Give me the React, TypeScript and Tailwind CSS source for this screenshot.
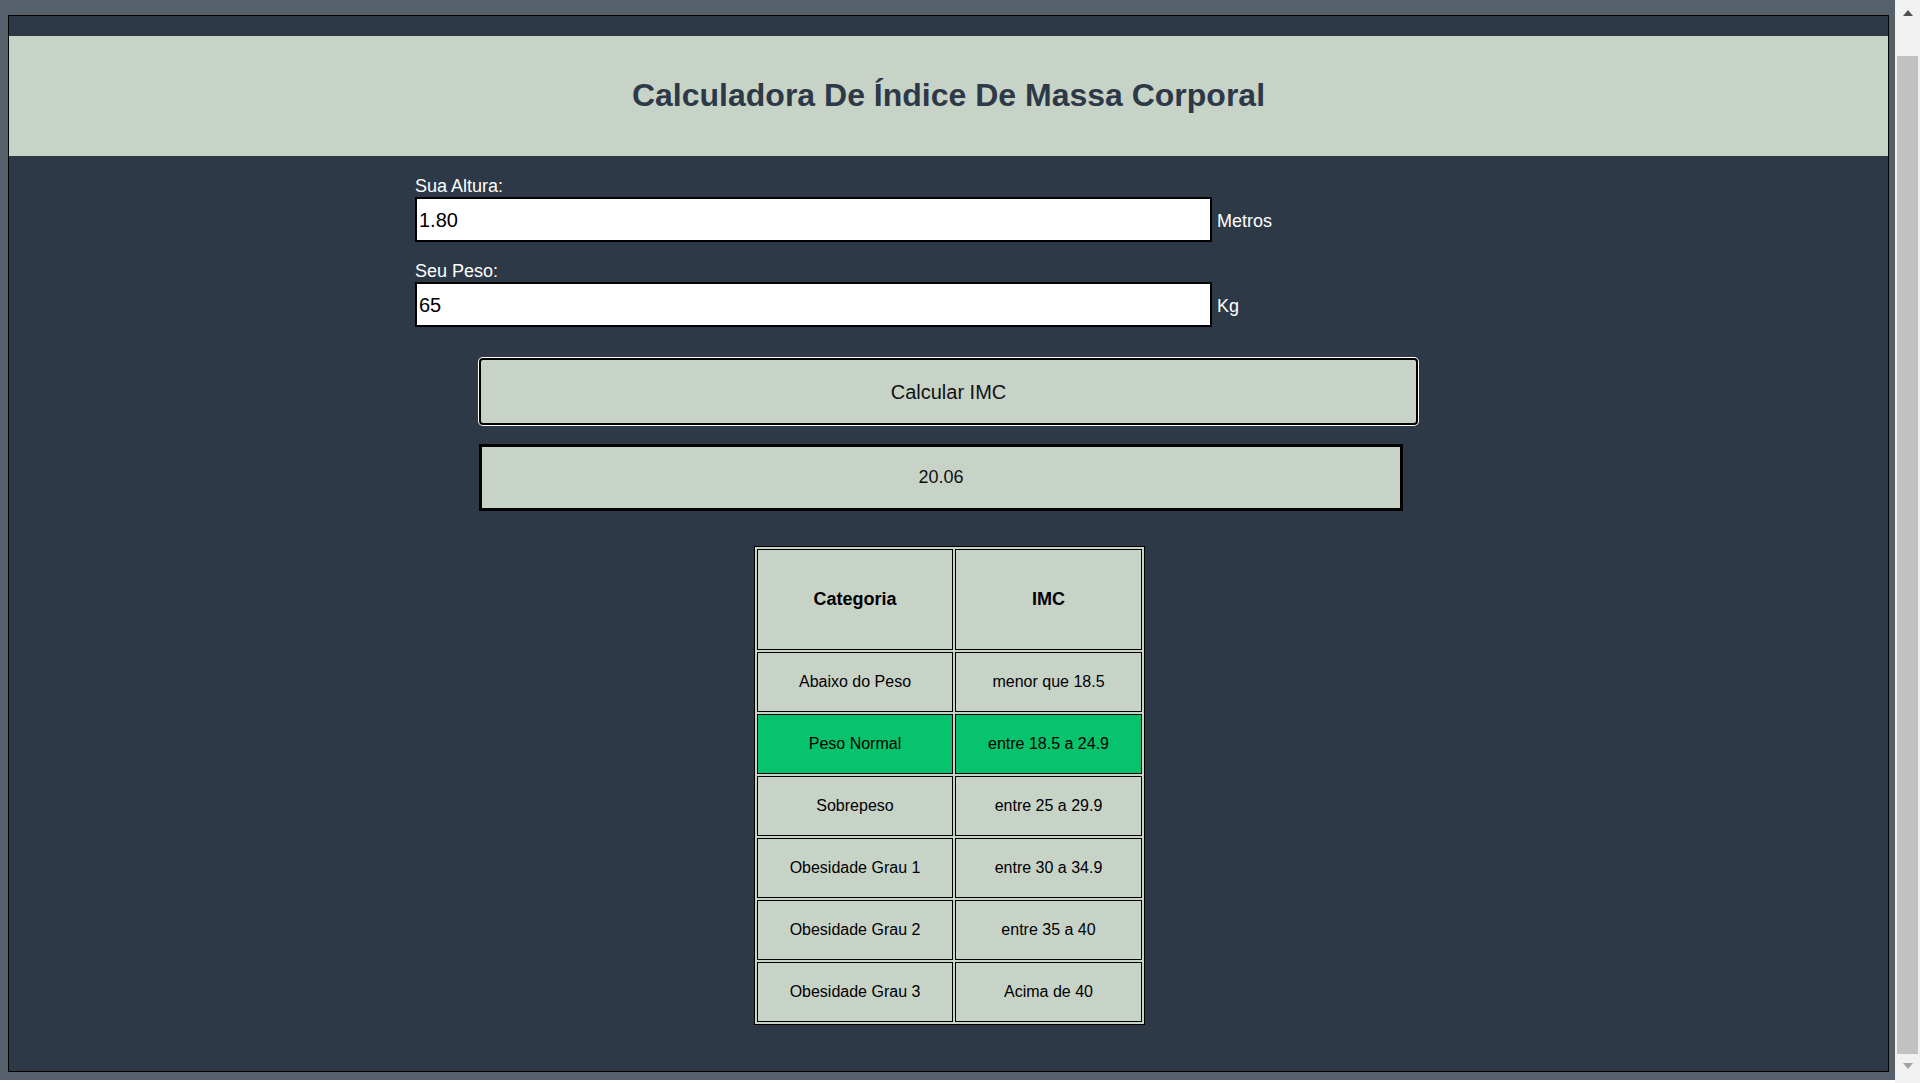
import { useState } from "react";

const faixas = [
  { categoria: "Abaixo do Peso", imc: "menor que 18.5", min: 0, max: 18.5 },
  { categoria: "Peso Normal", imc: "entre 18.5 a 24.9", min: 18.5, max: 25 },
  { categoria: "Sobrepeso", imc: "entre 25 a 29.9", min: 25, max: 30 },
  { categoria: "Obesidade Grau 1", imc: "entre 30 a 34.9", min: 30, max: 35 },
  { categoria: "Obesidade Grau 2", imc: "entre 35 a 40", min: 35, max: 40.01 },
  { categoria: "Obesidade Grau 3", imc: "Acima de 40", min: 40.01, max: 999 },
];

function Scrollbar() {
  return (
    <div className="w-[25px] h-[1083px] bg-[#f1f1f1] flex flex-col items-center shrink-0">
      <div className="h-[25px] w-full flex items-start justify-center pt-[10px]">
        <div className="w-0 h-0 border-l-[5px] border-r-[5px] border-b-[6px] border-l-transparent border-r-transparent border-b-[#505050]"></div>
      </div>
      <div className="h-[31px]"></div>
      <div className="w-[21px] h-[998px] bg-[#c1c1c1]"></div>
      <div className="flex-1 w-full flex items-start justify-center pt-[9px]">
        <div className="w-0 h-0 border-l-[5px] border-r-[5px] border-t-[6px] border-l-transparent border-r-transparent border-t-[#a3a3a3]"></div>
      </div>
    </div>
  );
}

export default function App() {
  const [altura, setAltura] = useState("1.80");
  const [peso, setPeso] = useState("65");
  const [imc, setImc] = useState(20.06);

  const calcular = () => {
    const a = parseFloat(altura);
    const p = parseFloat(peso);
    if (a > 0 && p > 0) setImc(Math.round((p / (a * a)) * 100) / 100);
  };

  return (
    <div className="w-[1920px] h-[1083px] flex overflow-hidden bg-white font-['Liberation_Sans',Arial,sans-serif]">
      <div className="w-[1895px] h-[1080px] bg-[#56606b] pt-[15px] pl-[8px] pr-[6px]">
        <div className="h-[1057px] border border-black bg-[#2d3947] pt-[20px]">
          {/* Cabeçalho */}
          <header className="h-[120px] bg-[#c8d3c8] flex items-center justify-center pb-[2px]">
            <h1 className="text-[32px] font-bold text-[#2d3947]">
              Calculadora De Índice De Massa Corporal
            </h1>
          </header>

          <div className="w-[1067px] mx-auto pt-[20px]">
            <label className="block text-[18px] leading-[21px] text-white">Sua Altura:</label>
            <div className="flex items-baseline">
              <input
                type="text"
                value={altura}
                onChange={(e) => setAltura(e.target.value)}
                className="w-[797px] h-[45px] border-2 border-black bg-white pl-[2px] pt-[2px] text-[20px] text-black outline-none"
              />
              <span className="ml-[5px] text-[18px] text-white">Metros</span>
            </div>

            <label className="block mt-[19px] text-[18px] leading-[21px] text-white">Seu Peso:</label>
            <div className="flex items-baseline">
              <input
                type="text"
                value={peso}
                onChange={(e) => setPeso(e.target.value)}
                className="w-[797px] h-[45px] border-2 border-black bg-white pl-[2px] pt-[2px] text-[20px] text-black outline-none"
              />
              <span className="ml-[5px] text-[18px] text-white">Kg</span>
            </div>

            <button
              onClick={calcular}
              className="block mt-[31px] ml-[64px] w-[939px] h-[67px] border-2 border-black rounded-[4px] shadow-[0_0_0_1px_#ffffff] bg-[#c8d3c8] text-[20px] text-[#111]"
            >
              Calcular IMC
            </button>

            <div className="mt-[19px] ml-[64px] w-[924px] h-[67px] border-[3px] border-black bg-[#c8d3c8] flex items-center justify-center text-[18px] text-[#111]">
              {imc.toFixed(2)}
            </div>

            {/* Tabela de referência */}
            <div className="mt-[35px] ml-[339px] w-fit grid grid-cols-[196px_187px] gap-[2px] p-[2px] border border-black bg-[#c8d3c8] text-black">
              <div className="h-[101px] border border-black flex items-center justify-center text-[18px] font-bold">
                Categoria
              </div>
              <div className="h-[101px] border border-black flex items-center justify-center text-[18px] font-bold">
                IMC
              </div>
              {faixas.map((f) => {
                const ativo = imc >= f.min && imc < f.max;
                return (
                  <div key={f.categoria} className="contents">
                    <div
                      className={`h-[60px] border border-black flex items-center justify-center text-[16px] ${ativo ? "bg-[#07c36d]" : ""}`}
                    >
                      {f.categoria}
                    </div>
                    <div
                      className={`h-[60px] border border-black flex items-center justify-center text-[16px] ${ativo ? "bg-[#07c36d]" : ""}`}
                    >
                      {f.imc}
                    </div>
                  </div>
                );
              })}
            </div>
          </div>
        </div>
      </div>
      <Scrollbar />
    </div>
  );
}
